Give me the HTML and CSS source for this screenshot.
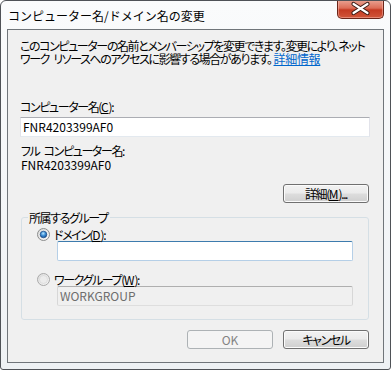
FILE: index.html
```html
<!DOCTYPE html>
<html lang="ja">
<head>
<meta charset="utf-8">
<link rel="stylesheet" href="styles.css">
</head>
<body>
<div class="window">
  <div class="titlebar">
    <span class="title">コンピューター名/ドメイン名の変更</span>
    <button class="close" aria-label="閉じる">
      <svg width="47" height="19" viewBox="0 0 47 19">
        <path d="M16.5 5 L30.5 14 M30.5 5 L16.5 14" stroke="#3b1a14" stroke-width="4.2" stroke-linecap="round"/>
        <path d="M16.5 5 L30.5 14 M30.5 5 L16.5 14" stroke="#ffffff" stroke-width="2.2" stroke-linecap="round"/>
      </svg>
    </button>
  </div>
  <div class="client">
    <p class="desc ja">このコンピューターの名前とメンバーシップを変更できます。変更により、ネット<br>ワーク リソースへのアクセスに影響する場合があります。<a href="#" class="link">詳細情報</a></p>
    <div class="label ja">コンピューター名(<u class="lat">C</u>):</div>
    <div class="textbox">FNR4203399AF0</div>
    <div class="fullname">
      <div class="ja">フル コンピューター名:</div>
      <div>FNR4203399AF0</div>
    </div>
    <div class="row-right">
      <button class="btn ja">詳細(<u class="lat">M</u>)...</button>
    </div>
    <fieldset class="group">
      <legend class="ja">所属するグループ</legend>
      <div class="radio-row first">
        <svg class="radio" width="13" height="13" viewBox="0 0 13 13">
          <defs>
            <linearGradient id="rgA" x1="0" y1="0" x2="1" y2="1"><stop offset="0" stop-color="#d8d8d8"/><stop offset="1" stop-color="#fbfbfb"/></linearGradient>
            <radialGradient id="rbA" cx="45%" cy="35%" r="65%"><stop offset="0" stop-color="#b9e6ff"/><stop offset="0.5" stop-color="#3d8fd6"/><stop offset="1" stop-color="#164f94"/></radialGradient>
          </defs>
          <circle cx="6.5" cy="6.5" r="6" fill="url(#rgA)" stroke="#8b8c8c"/>
          <circle cx="6.5" cy="6.5" r="3.3" fill="url(#rbA)" stroke="#1a4a85" stroke-width="0.7"/>
        </svg>
        <span class="ja">ドメイン(<u class="lat">D</u>):</span>
      </div>
      <div class="textbox indent focus"></div>
      <div class="radio-row second">
        <svg class="radio" width="13" height="13" viewBox="0 0 13 13">
          <defs>
            <linearGradient id="rgB" x1="0" y1="0" x2="1" y2="1"><stop offset="0" stop-color="#dcdcdc"/><stop offset="1" stop-color="#f7f7f7"/></linearGradient>
          </defs>
          <circle cx="6.5" cy="6.5" r="6" fill="url(#rgB)" stroke="#a9a9a9"/>
          <circle cx="6.5" cy="6.5" r="4" fill="#ececec" stroke="#d4d4d4" stroke-width="0.6"/>
        </svg>
        <span class="ja">ワークグループ(<u class="lat">W</u>):</span>
      </div>
      <div class="textbox indent disabled">WORKGROUP</div>
    </fieldset>
    <div class="buttons">
      <button class="btn disabled-btn">OK</button>
      <button class="btn ja">キャンセル</button>
    </div>
  </div>
</div>
</body>
</html>
```

FILE: styles.css
```css
* { box-sizing: border-box; }
html, body {
  margin: 0;
  padding: 0;
  background: #ffffff;
}
body {
  font-family: "Noto Sans CJK JP", "Noto Sans", sans-serif;
  font-size: 12px;
  color: #000;
}
.ja {
  font-feature-settings: "palt";
  letter-spacing: -1.4px;
  word-spacing: 3px;
}
.lat {
  letter-spacing: 0;
}
.window {
  width: 391px;
  height: 370px;
  border: 1px solid #4f5257;
  border-radius: 6px 6px 3px 3px;
  background: linear-gradient(#fafbfc, #eef1f4);
  padding: 0 6px 6px 6px;
  display: flex;
  flex-direction: column;
  overflow: hidden;
}
.titlebar {
  height: 28px;
  display: flex;
  align-items: flex-start;
  justify-content: space-between;
}
.title {
  font-size: 12px;
  line-height: 14px;
  margin-top: 8px;
  margin-left: 1px;
  color: #000;
}
.close {
  width: 47px;
  height: 19px;
  margin: -1px 0 0 0;
  padding: 0;
  border: 1px solid #6a2519;
  border-top: none;
  border-radius: 0 0 5px 5px;
  background: linear-gradient(#eaa494 0%, #dc6d57 45%, #c53a22 55%, #d0563a 100%);
  box-shadow: inset 0 0 0 1px rgba(255,200,190,0.45);
  display: block;
}
.close svg { display: block; margin: -1px 0 0 -1px; }
.client {
  flex: 1;
  border: 1px solid #70757a;
  background: #f0f0f0;
  padding: 9px 13px 0 12px;
  display: flex;
  flex-direction: column;
}
.desc {
  margin: 0;
  line-height: 13px;
  white-space: nowrap;
}
.link {
  color: #0066cc;
  text-decoration: underline;
  letter-spacing: -0.3px;
  margin-left: 2px;
}
.label {
  margin-top: 35px;
  line-height: 13px;
}
.textbox {
  height: 20px;
  margin-top: 4px;
  border: 1px solid;
  border-color: #abadb3 #e2e3ea #e3e9ef #e2e3ea;
  background: #fff;
  line-height: 18px;
  padding-left: 2px;
  font-size: 12px;
}
.fullname {
  margin-top: 7px;
  line-height: 14px;
  padding-left: 1px;
}
.row-right {
  margin-top: 12px;
  display: flex;
  justify-content: flex-end;
  padding-right: 1px;
}
.btn {
  width: 86px;
  height: 19px;
  padding: 0;
  border: 1px solid #707070;
  border-radius: 3px;
  background: linear-gradient(#f2f2f2 0%, #ebebeb 48%, #dddddd 52%, #cfcfcf 100%);
  box-shadow: inset 0 0 0 1px #fbfbfb;
  font-family: inherit;
  font-size: 12px;
  line-height: 16px;
  color: #000;
}
.group {
  margin: 8px 1px 0 1px;
  padding: 0 0 13px 0;
  border: 1px solid #d5dfe5;
  border-radius: 3px;
  min-width: 0;
}
.group legend {
  margin-left: 6px;
  padding: 0 2px 0 1px;
  line-height: 13px;
}
.radio-row {
  display: flex;
  align-items: center;
  gap: 4px;
  padding-left: 15px;
  line-height: 13px;
}
.radio { display: block; flex: none; }
.radio-row.first { margin-top: 4px; }
.radio-row.second { margin-top: 12px; }
.textbox.indent {
  margin: 0 15px 0 35px;
  border-radius: 2px;
}
.textbox.focus {
  border-color: #3d7bad #b5cfe7 #b5cfe7 #b5cfe7;
}
.textbox.disabled {
  background: #f0f0f0;
  border-color: #afafaf #d7d7d7 #dedede #d7d7d7;
  color: #6d6d6d;
}
.buttons {
  margin-top: 10px;
  display: flex;
  justify-content: flex-end;
  gap: 10px;
  padding-right: 1px;
}
.btn.disabled-btn {
  border-color: #adb2b5;
  background: #f4f4f4;
  box-shadow: none;
  color: #838383;
}
```
